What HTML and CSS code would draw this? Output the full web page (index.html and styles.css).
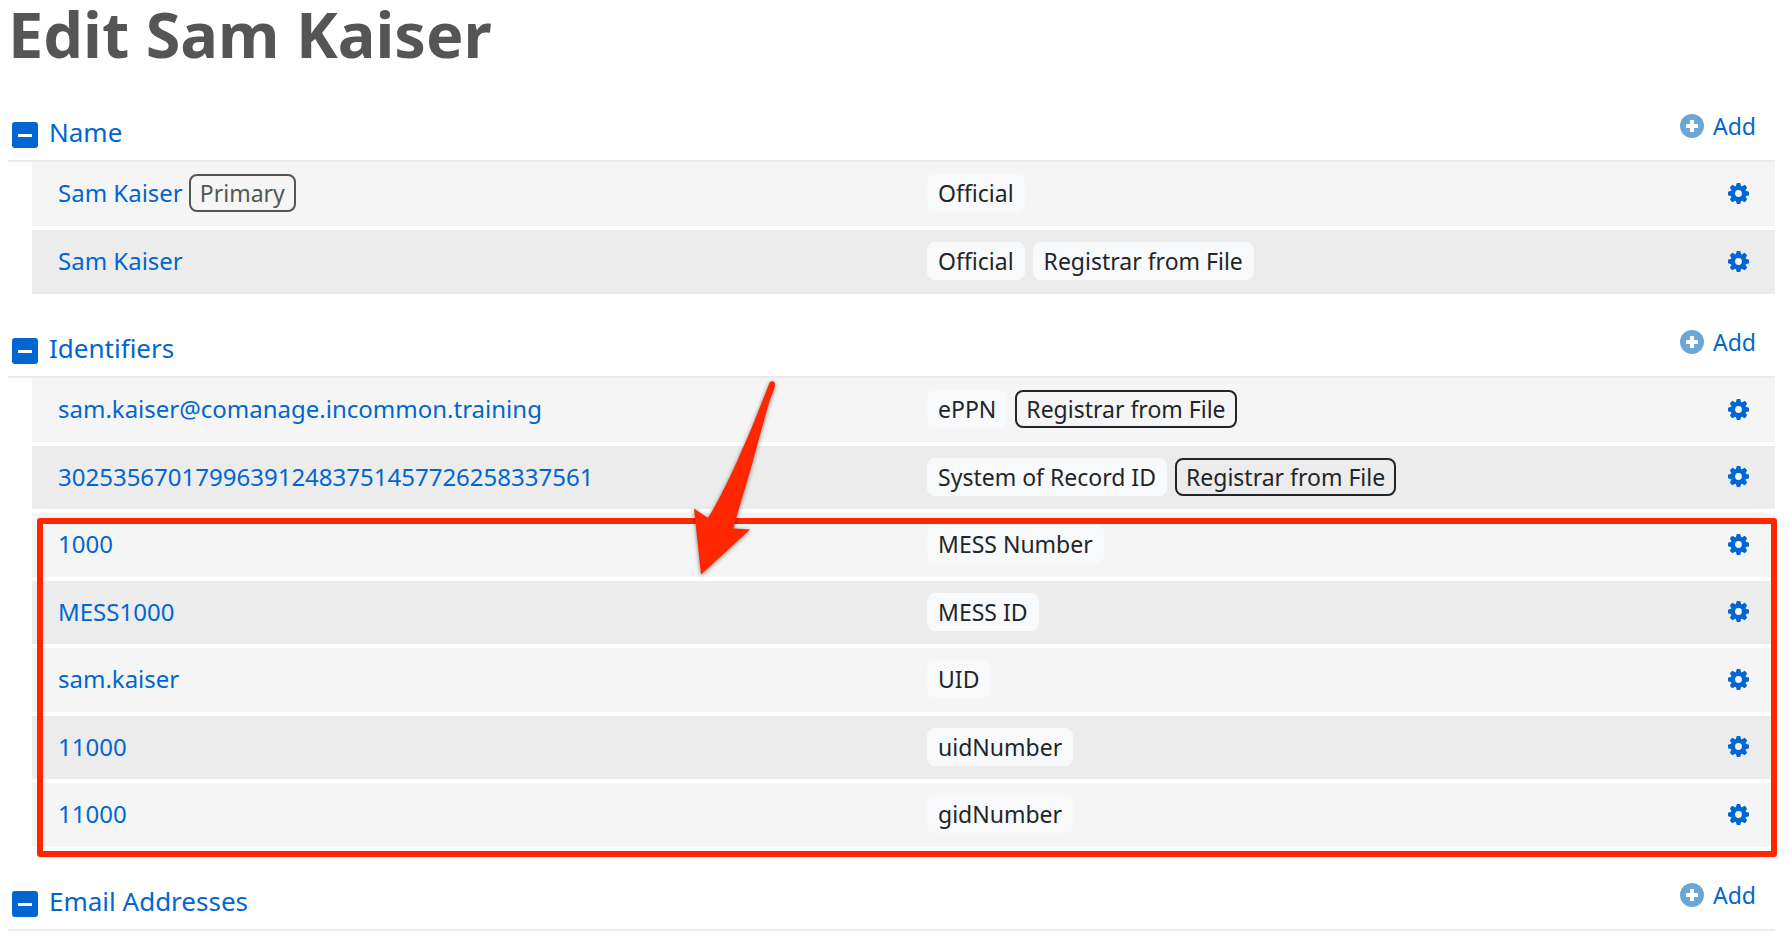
FILE: index.html
```
<!DOCTYPE html>
<html lang="en">
<head>
<meta charset="utf-8">
<title>Edit Sam Kaiser</title>
<link rel="stylesheet" href="styles.css">
</head>
<body>
<svg class="sprite" aria-hidden="true">
  <symbol id="minus" viewBox="0 0 26 26"><rect width="26" height="26" rx="3" fill="#0066d1"/><rect x="6" y="12" width="14" height="3" fill="#fff"/></symbol>
  <symbol id="plus" viewBox="0 0 24 24"><circle cx="12" cy="12" r="12" fill="#6ba6d6"/><path d="M10 6h4v4h4v4h-4v4h-4v-4H6v-4h4z" fill="#fff"/></symbol>
  <symbol id="gear" viewBox="-8 -8 16 16">
    <g fill="#0066d1">
      <path id="tooth" d="M-2.200-5L-1.300-8H1.300L2.200-5V5L1.300 8H-1.300L-2.200 5Z"/>
      <use href="#tooth" transform="rotate(45)"/>
      <use href="#tooth" transform="rotate(90)"/>
      <use href="#tooth" transform="rotate(135)"/>
      <circle r="5.800"/>
    </g>
    <circle class="gear-hole" r="2.600"/>
  </symbol>
</svg>
<main>
  <h1 class="title">Edit Sam Kaiser</h1>

  <section class="section">
    <header class="section-head">
      <h2 class="section-title"><button class="toggle" type="button"><svg class="toggle-icon" aria-hidden="true"><use href="#minus"/></svg>Name</button></h2>
      <a class="add" href="#"><svg class="add-icon" aria-hidden="true"><use href="#plus"/></svg>Add</a>
    </header>
    <ul class="list">
      <li class="row"><div class="value"><a href="#">Sam Kaiser</a><span class="badge primary">Primary</span></div><div class="badges"><span class="badge light">Official</span></div><button class="gear" type="button" aria-label="Actions"><svg aria-hidden="true"><use href="#gear"/></svg></button></li>
      <li class="row"><div class="value"><a href="#">Sam Kaiser</a></div><div class="badges"><span class="badge light">Official</span><span class="badge light">Registrar from File</span></div><button class="gear" type="button" aria-label="Actions"><svg aria-hidden="true"><use href="#gear"/></svg></button></li>
    </ul>
  </section>

  <section class="section">
    <header class="section-head">
      <h2 class="section-title"><button class="toggle" type="button"><svg class="toggle-icon" aria-hidden="true"><use href="#minus"/></svg>Identifiers</button></h2>
      <a class="add" href="#"><svg class="add-icon" aria-hidden="true"><use href="#plus"/></svg>Add</a>
    </header>
    <div class="annotated">
      <ul class="list">
        <li class="row"><div class="value"><a href="#">sam.kaiser@comanage.incommon.training</a></div><div class="badges"><span class="badge light">ePPN</span><span class="badge outline">Registrar from File</span></div><button class="gear" type="button" aria-label="Actions"><svg aria-hidden="true"><use href="#gear"/></svg></button></li>
        <li class="row"><div class="value"><a href="#">302535670179963912483751457726258337561</a></div><div class="badges"><span class="badge light">System of Record ID</span><span class="badge outline">Registrar from File</span></div><button class="gear" type="button" aria-label="Actions"><svg aria-hidden="true"><use href="#gear"/></svg></button></li>
        <li class="row"><div class="value"><a href="#">1000</a></div><div class="badges"><span class="badge light">MESS Number</span></div><button class="gear" type="button" aria-label="Actions"><svg aria-hidden="true"><use href="#gear"/></svg></button></li>
        <li class="row"><div class="value"><a href="#">MESS1000</a></div><div class="badges"><span class="badge light">MESS ID</span></div><button class="gear" type="button" aria-label="Actions"><svg aria-hidden="true"><use href="#gear"/></svg></button></li>
        <li class="row"><div class="value"><a href="#">sam.kaiser</a></div><div class="badges"><span class="badge light">UID</span></div><button class="gear" type="button" aria-label="Actions"><svg aria-hidden="true"><use href="#gear"/></svg></button></li>
        <li class="row"><div class="value"><a href="#">11000</a></div><div class="badges"><span class="badge light">uidNumber</span></div><button class="gear" type="button" aria-label="Actions"><svg aria-hidden="true"><use href="#gear"/></svg></button></li>
        <li class="row"><div class="value"><a href="#">11000</a></div><div class="badges"><span class="badge light">gidNumber</span></div><button class="gear" type="button" aria-label="Actions"><svg aria-hidden="true"><use href="#gear"/></svg></button></li>
      </ul>
      <div class="highlight"></div>
      <svg class="arrow" viewBox="0 0 84 198" aria-hidden="true"><path d="M76.500 3C78 0 82.500 1 82 5C81 11 78 16 75 26L59 84C52 109 44 134 40.500 148.500L57 149.500L8 194.500L1 128.500L15 138C31 112 45 80 59 47Z" fill="#ff2600"/></svg>
    </div>
  </section>

  <section class="section">
    <header class="section-head">
      <h2 class="section-title"><button class="toggle" type="button"><svg class="toggle-icon" aria-hidden="true"><use href="#minus"/></svg>Email Addresses</button></h2>
      <a class="add" href="#"><svg class="add-icon" aria-hidden="true"><use href="#plus"/></svg>Add</a>
    </header>
  </section>
</main>
</body>
</html>
```

FILE: styles.css
```
* { box-sizing: border-box; }

body {
  margin: 0;
  padding: 0 17px 0 8px;
  background: #fff;
  color: #212529;
  font-family: "Noto Sans", sans-serif;
  font-size: 24px;
  line-height: 32px;
}

button {
  padding: 0;
  border: 0;
  background: none;
  font: inherit;
  color: inherit;
  cursor: pointer;
}

a { color: #0066d1; text-decoration: none; }

.sprite { position: absolute; width: 0; height: 0; }

.title {
  margin: 0 0 44px;
  color: #555;
  font-size: 63px;
  font-weight: 700;
  line-height: 68px;
}

.section { margin-bottom: 34px; }

.section-head {
  display: flex;
  justify-content: space-between;
  align-items: flex-start;
  height: 50px;
  padding: 0 19px 0 4px;
  border-bottom: 2px solid #ebebeb;
}

.section-title {
  margin: 0;
  color: #0066d1;
  font-size: 26px;
  font-weight: 400;
  line-height: 40px;
}

.toggle { display: flex; gap: 11px; }

.toggle-icon { width: 26px; height: 26px; margin-top: 10px; }

.add {
  display: flex;
  align-items: center;
  gap: 9px;
  font-size: 23px;
  line-height: 28px;
}

.add-icon { width: 24px; height: 24px; }

.list {
  display: flex;
  flex-direction: column;
  gap: 4px;
  margin: 0 0 0 24px;
  padding: 0;
  list-style: none;
}

.row {
  display: grid;
  grid-template-columns: 868fr 799fr 24px;
  align-items: center;
  min-height: 64px;
  padding: 0 24px 2px 26px;
  background: #f5f5f5;
}

.row:nth-child(even) { min-height: 63px; background: #ececec; }
.row:last-child { min-height: 64px; }

.value { display: flex; align-items: center; gap: 6px; }

.badges { display: flex; gap: 8px; }

.badge {
  padding: 3px 9px;
  border: 2px solid transparent;
  border-radius: 8px;
  font-size: 23px;
  line-height: 28px;
}

.light { border-color: #f8f9fa; background: #f8f9fa; }
.outline { border-color: #212529; }
.primary { border-color: #555; color: #555; }

.gear { display: flex; justify-content: center; }
.gear svg { width: 21px; height: 21px; }
.gear-hole { fill: #f5f5f5; }

.annotated { position: relative; }

.highlight {
  position: absolute;
  inset: 140px -2px -10px 29px;
  border: 6px solid #ff2600;
  border-radius: 3px;
  pointer-events: none;
}

.arrow {
  position: absolute;
  top: 2px;
  left: 685px;
  width: 84px;
  height: 198px;
  filter: drop-shadow(0 1px 2px rgba(0, 0, 0, 0.5));
  pointer-events: none;
}
```
